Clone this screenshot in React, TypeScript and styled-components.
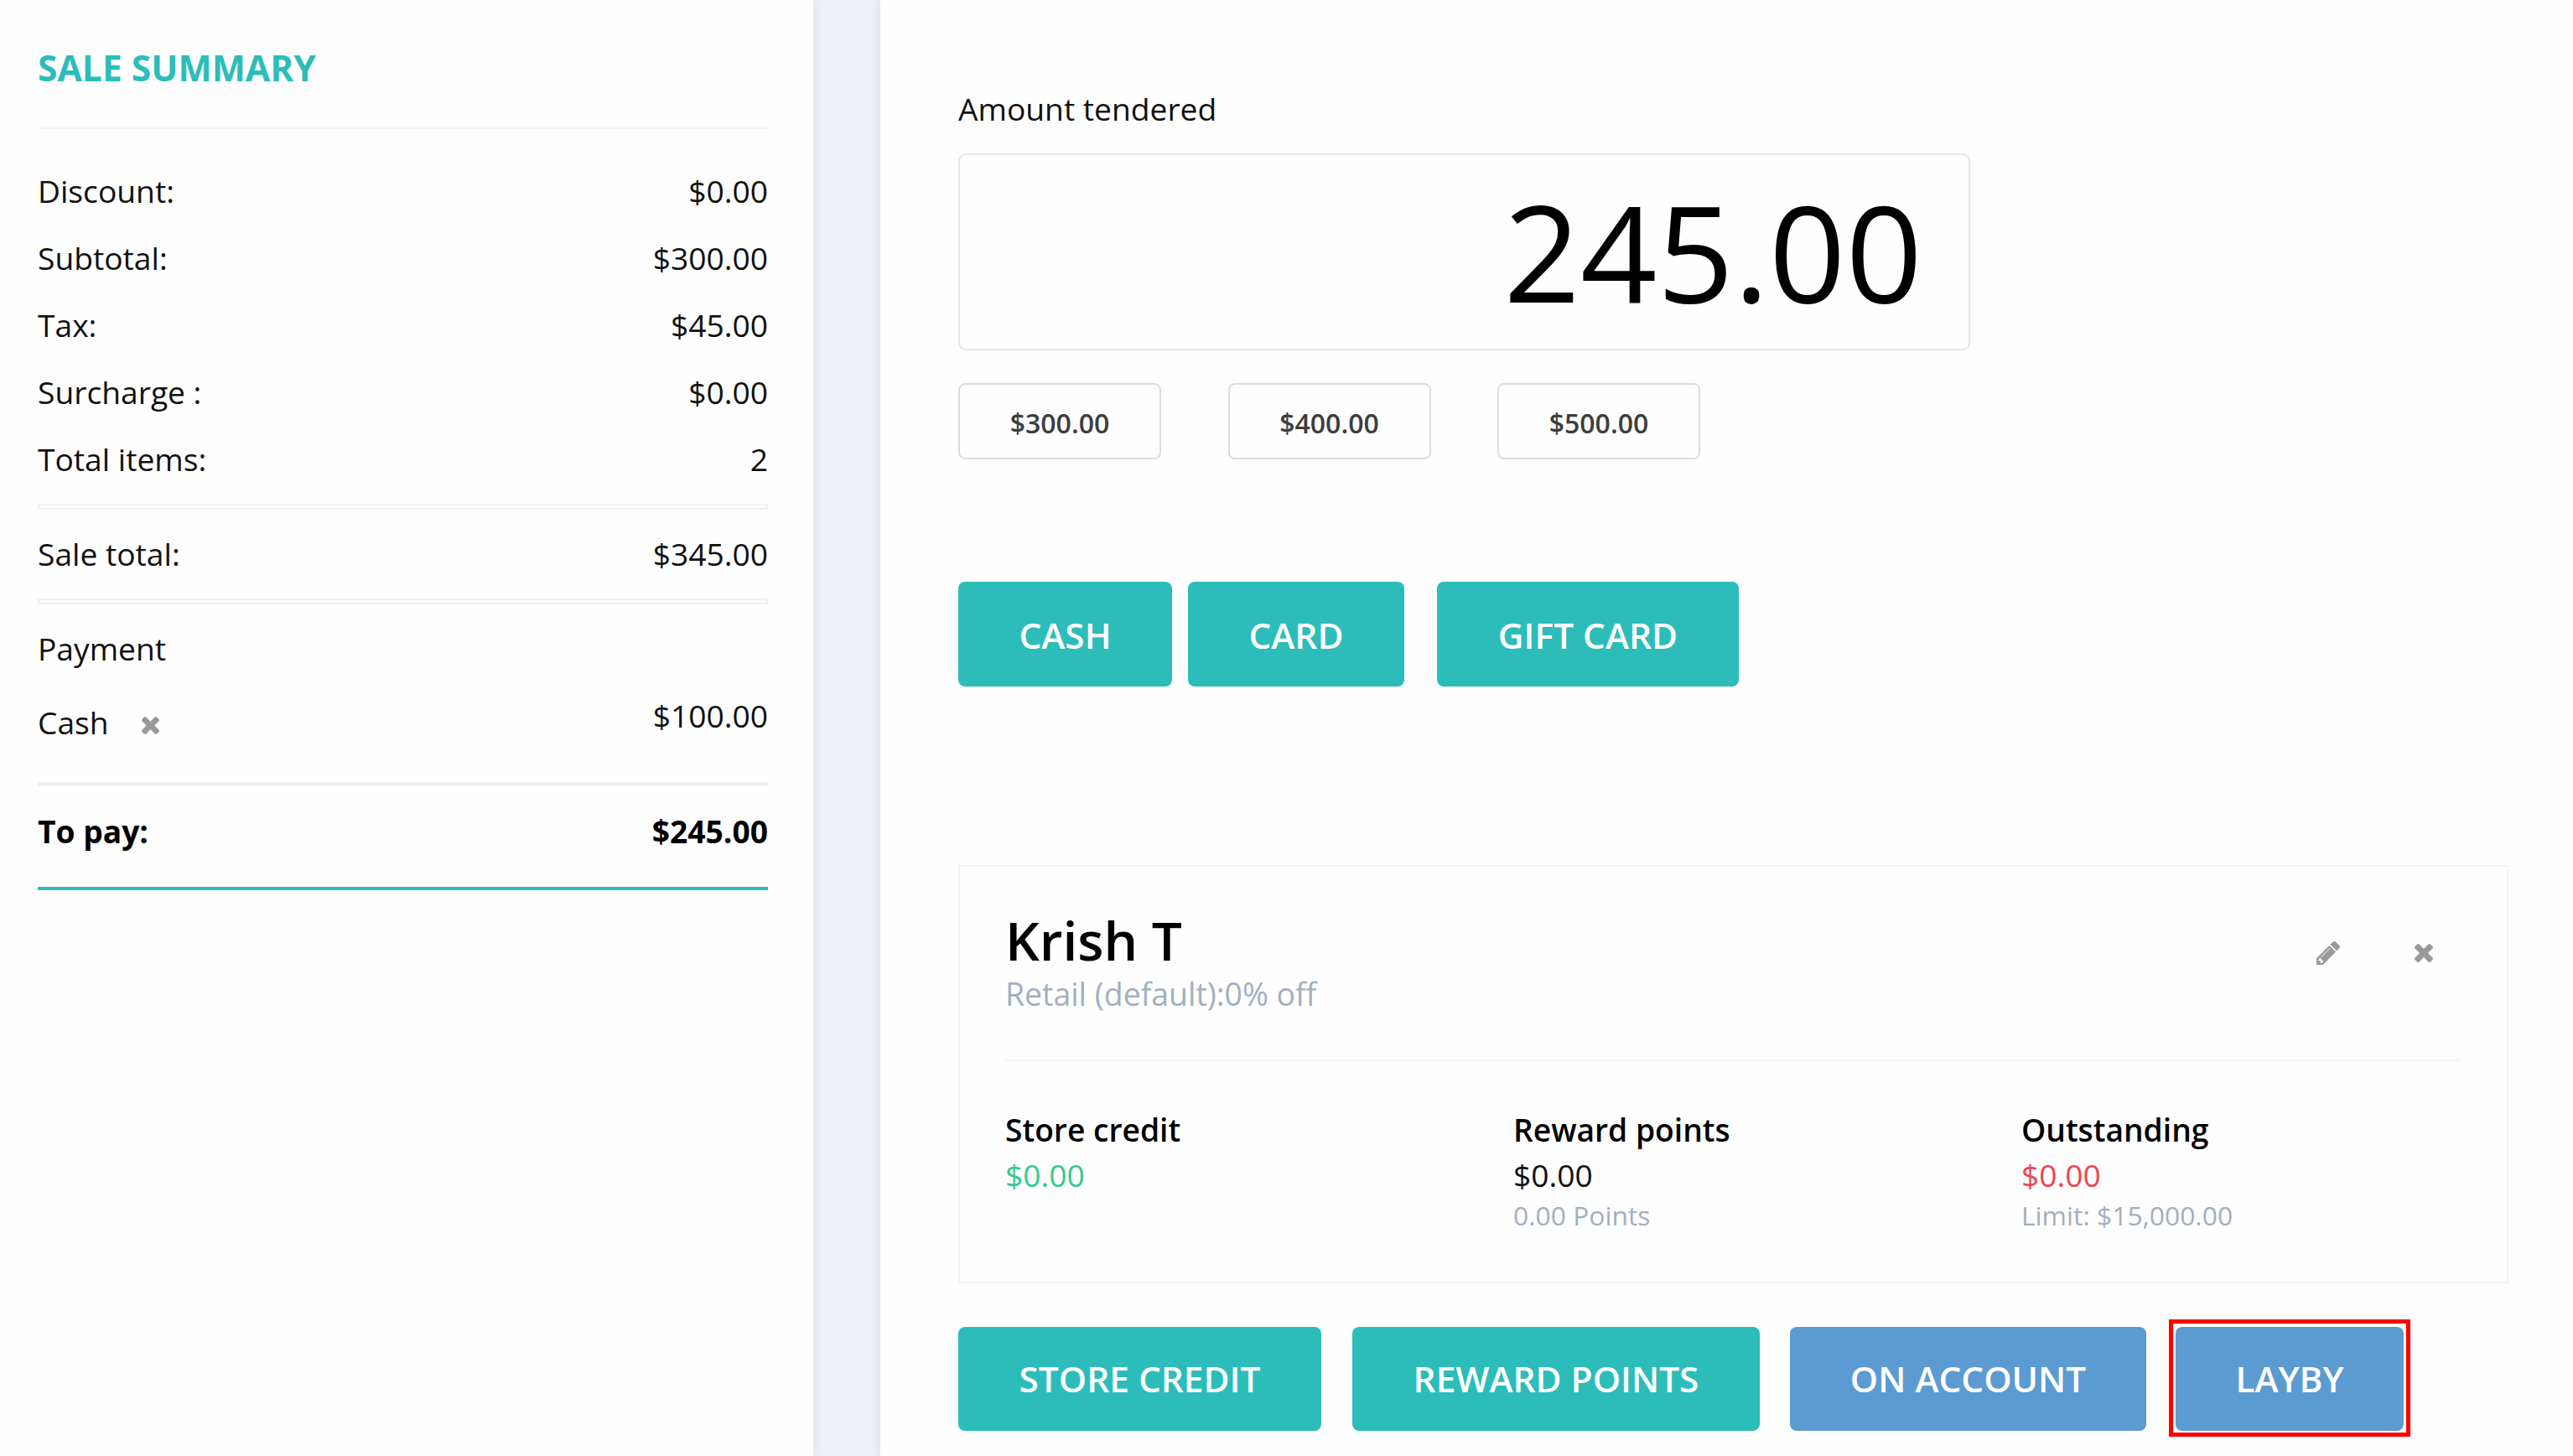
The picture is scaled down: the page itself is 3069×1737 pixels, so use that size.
import { useState } from 'react';
import styled, { createGlobalStyle } from 'styled-components';

const GlobalStyle = createGlobalStyle`
  * {
    box-sizing: border-box;
  }
  body {
    margin: 0;
    background-color: #edf0f5;
    color: #111;
    font-family: 'Open Sans', 'Noto Sans', sans-serif;
    font-size: 37.2px;
    overflow: hidden;
  }
`;
const Page = styled.div`
  display: flex;
  gap: 80px;
  height: 1737px;
`;

/* left column */
const Summary = styled.aside`
  flex-shrink: 0;
  width: 970px;
  padding: 40px 54px 0 45px;
  background-color: #fefefe;
  box-shadow: 0 0 12px rgba(120, 140, 160, 0.16);
`;
const SummaryTitle = styled.h2`
  margin: 0 0 34px;
  padding-bottom: 32px;
  border-bottom: 2px solid #f4f5f5;
  color: #2cbdba;
  font-size: 42.6px;
  font-weight: 700;
  line-height: 80px;
`;
const SummaryRow = styled.div<{ $bold?: boolean }>`
  display: flex;
  justify-content: space-between;
  height: 80px;
  line-height: 80px;
  color: ${(p) => (p.$bold ? '#000' : '#111')};
  font-weight: ${(p) => (p.$bold ? 700 : 400)};
`;
const DoubleLine = styled.div`
  height: 7px;
  margin: 13px 0;
  border: 2px solid #f0f1f1;
`;
const PaymentRow = styled(SummaryRow)`
  height: 119px;
`;
const PaymentType = styled.span`
  display: flex;
  gap: 39px;
  height: 80px;
  margin-top: 8px;
`;
const SolidLine = styled.div`
  height: 5px;
  margin-bottom: 14px;
  background-color: #f0f1f1;
`;
const TealLine = styled.div`
  height: 4px;
  margin-top: 26px;
  background-color: #2cbdba;
`;

/* right column */
const Payment = styled.main`
  flex: 1;
  min-width: 0;
  padding: 90px 77px 0 93px;
  background-color: #fefefe;
  box-shadow: 0 0 12px rgba(120, 140, 160, 0.16);
`;
const Label = styled.label`
  display: block;
  height: 93px;
  line-height: 80px;
`;
const AmountInput = styled.input`
  display: block;
  width: 1207px;
  height: 235px;
  padding: 0 55px 3px 20px;
  border: 2px solid #dfe9ea;
  border-radius: 9px;
  background-color: #fefefe;
  color: #000;
  font: 400 160px 'Open Sans', sans-serif;
  text-align: right;
  outline: none;
`;
const QuickAmounts = styled.div`
  display: flex;
  gap: 79.5px;
  margin: 39px 0 146px;
`;
const QuickButton = styled.button`
  width: 242px;
  height: 91px;
  padding: 3px 0 0;
  border: 2px solid #dbdcdc;
  border-radius: 8px;
  background-color: #fefefe;
  color: #3d3d3d;
  font: 600 32px 'Open Sans', sans-serif;
`;
const ButtonRow = styled.div`
  display: flex;
`;
const PayButton = styled.button<{ $width: number; $gap?: number; $blue?: boolean }>`
  width: ${(p) => p.$width}px;
  height: 124px;
  margin: 0 ${(p) => p.$gap || 0}px 0 0;
  padding: 0;
  border: none;
  border-radius: 8px;
  background-color: ${(p) => (p.$blue ? '#5c9ad2' : '#2cbdba')};
  color: #fff;
  font: 600 42.4px/60px 'Open Sans', sans-serif;
`;
const TenderButton = styled(PayButton)`
  height: 125px;
  padding-top: 3px;
`;
const Highlight = styled.div`
  height: 140px;
  margin: -9px 0 0;
  padding: 4px 3px;
  border: 5px solid #f00;
`;

/* customer */
const Customer = styled.section`
  height: 499px;
  margin: 213px 0 52px;
  padding: 50px 55px 0 54px;
  border: 2px solid #f1f5f5;
`;
const CustomerHeader = styled.header`
  display: flex;
  justify-content: space-between;
  height: 182px;
  border-bottom: 2px solid #f4f5f6;
`;
const CustomerName = styled.h1`
  margin: 0;
  color: #000;
  font-size: 64px;
  font-weight: 600;
  line-height: 76px;
`;
const Muted = styled.div<{ $small?: boolean }>`
  color: #a2afc1;
  font-size: ${(p) => (p.$small ? 31.8 : 37.4)}px;
  line-height: ${(p) => (p.$small ? 44 : 52)}px;
`;
const IconGroup = styled.div`
  display: flex;
  align-items: center;
  gap: 89px;
  height: 29px;
  margin: 38px 33px 0 0;
`;
const Balances = styled.div`
  display: grid;
  grid-template-columns: repeat(3, 606px);
  margin-top: 55px;
`;
const BalanceTitle = styled.div`
  color: #000;
  font-weight: 600;
  line-height: 54px;
`;
const BalanceValue = styled.div<{ $color?: string }>`
  color: ${(p) => p.$color || '#111'};
  line-height: 53px;
`;
const IconButton = styled.button`
  display: flex;
  align-items: center;
  padding: 0;
  border: none;
  background: none;
  color: #999;
`;
const RemovePayment = styled(IconButton)`
  padding-top: 7px;
`;

const TimesIcon = ({ size }: { size: number }) => (
  <svg width={size} height={size} viewBox='302 366 1188 1188' fill='currentColor'>
    <path d='M1490 1322q0 40-28 68l-136 136q-28 28-68 28t-68-28l-294-294-294 294q-28 28-68 28t-68-28l-136-136q-28-28-28-68t28-68l294-294-294-294q-28-28-28-68t28-68l136-136q28-28 68-28t68 28l294 294 294-294q28-28 68-28t68 28l136 136q28 28 28 68t-28 68l-294 294 294 294q28 28 28 68z' />
  </svg>
);
const PencilIcon = () => (
  <svg width={28} height={28} viewBox='128 149 1515 1515' fill='currentColor'>
    <path d='M491 1536l91-91-235-235-91 91v107h128v128h107zm523-928q0-22-22-22-10 0-17 7l-542 542q-7 7-7 17 0 22 22 22 10 0 17-7l542-542q7-7 7-17zm-54-192l416 416-832 832h-416v-416zm683 96q0 53-37 90l-166 166-416-416 166-165q36-38 90-38 53 0 91 38l235 234q37 39 37 91z' />
  </svg>
);

const totals = [
  { label: 'Discount:', value: '$0.00' },
  { label: 'Subtotal:', value: '$300.00' },
  { label: 'Tax:', value: '$45.00' },
  { label: 'Surcharge :', value: '$0.00' },
  { label: 'Total items:', value: '2' },
];
const quickAmounts = ['300.00', '400.00', '500.00'];

const SaleSummary = () => (
  <Summary>
    <SummaryTitle>SALE SUMMARY</SummaryTitle>
    {totals.map((row) => (
      <SummaryRow key={row.label}>
        <span>{row.label}</span>
        <span>{row.value}</span>
      </SummaryRow>
    ))}
    <DoubleLine />
    <SummaryRow>
      <span>Sale total:</span>
      <span>$345.00</span>
    </SummaryRow>
    <DoubleLine />
    <SummaryRow>
      <span>Payment</span>
    </SummaryRow>
    <PaymentRow>
      <PaymentType>
        Cash
        <RemovePayment aria-label='Remove payment'>
          <TimesIcon size={21} />
        </RemovePayment>
      </PaymentType>
      <span>$100.00</span>
    </PaymentRow>
    <SolidLine />
    <SummaryRow $bold>
      <span>To pay:</span>
      <span>$245.00</span>
    </SummaryRow>
    <TealLine />
  </Summary>
);

const CustomerCard = () => (
  <Customer>
    <CustomerHeader>
      <div>
        <CustomerName>Krish T</CustomerName>
        <Muted>Retail (default):0% off</Muted>
      </div>
      <IconGroup>
        <IconButton aria-label='Edit customer'>
          <PencilIcon />
        </IconButton>
        <IconButton aria-label='Remove customer'>
          <TimesIcon size={22} />
        </IconButton>
      </IconGroup>
    </CustomerHeader>
    <Balances>
      <div>
        <BalanceTitle>Store credit</BalanceTitle>
        <BalanceValue $color='#37c98b'>$0.00</BalanceValue>
      </div>
      <div>
        <BalanceTitle>Reward points</BalanceTitle>
        <BalanceValue>$0.00</BalanceValue>
        <Muted $small>0.00 Points</Muted>
      </div>
      <div>
        <BalanceTitle>Outstanding</BalanceTitle>
        <BalanceValue $color='#ee4652'>$0.00</BalanceValue>
        <Muted $small>Limit: $15,000.00</Muted>
      </div>
    </Balances>
  </Customer>
);

export const App = () => {
  const [amount, setAmount] = useState('245.00');

  return (
    <>
      <GlobalStyle />
      <Page>
        <SaleSummary />
        <Payment>
          <Label htmlFor='amount'>Amount tendered</Label>
          <AmountInput
            id='amount'
            value={amount}
            onChange={(e: any) => setAmount(e.target.value)}
          />
          <QuickAmounts>
            {quickAmounts.map((value) => (
              <QuickButton key={value} onClick={() => setAmount(value)}>
                ${value}
              </QuickButton>
            ))}
          </QuickAmounts>
          <ButtonRow>
            <TenderButton $width={255} $gap={19}>CASH</TenderButton>
            <TenderButton $width={258} $gap={39}>CARD</TenderButton>
            <TenderButton $width={360}>GIFT CARD</TenderButton>
          </ButtonRow>
          <CustomerCard />
          <ButtonRow>
            <PayButton $width={433} $gap={37}>STORE CREDIT</PayButton>
            <PayButton $width={486} $gap={36}>REWARD POINTS</PayButton>
            <PayButton $width={425} $gap={27} $blue>ON ACCOUNT</PayButton>
            <Highlight>
              <PayButton $width={272} $blue>LAYBY</PayButton>
            </Highlight>
          </ButtonRow>
        </Payment>
      </Page>
    </>
  );
};

export default App;
